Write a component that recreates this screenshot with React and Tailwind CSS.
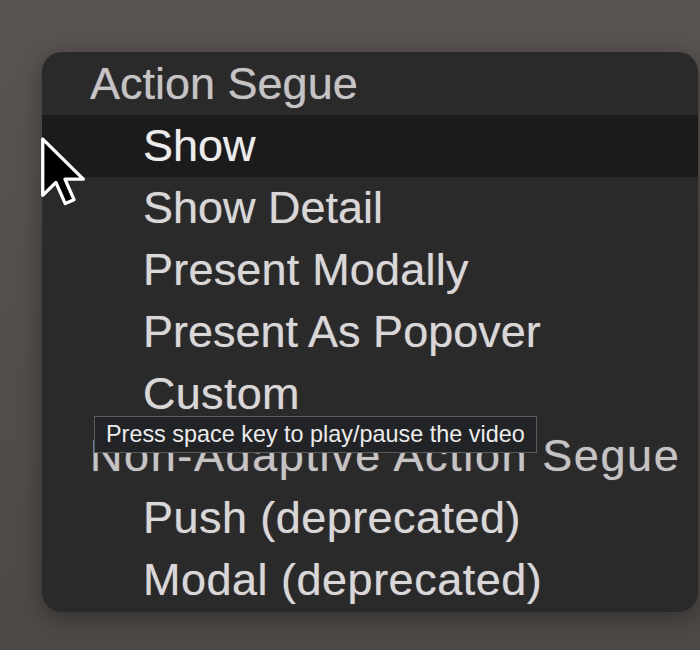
import React from "react";

const rows = [
  { t: "Action Segue", h: true, tr: "" },
  { t: "Show", sel: true, tr: "" },
  { t: "Show Detail", tr: "" },
  { t: "Present Modally", tr: "tracking-[0.2px]" },
  { t: "Present As Popover", tr: "" },
  { t: "Custom", tr: "tracking-[0.3px]" },
  { t: "Non-Adaptive Action Segue", h: true, tr: "tracking-[1.6px]" },
  { t: "Push (deprecated)", tr: "tracking-[0.45px]" },
  { t: "Modal (deprecated)", tr: "tracking-[0.5px]" },
];

export default function App() {
  return (
    <div className="relative w-[700px] h-[650px] overflow-hidden bg-gradient-to-b from-[#5a5452] to-[#4d4947]" style={{ fontFamily: '"Liberation Sans", Arial, sans-serif' }}>
      <div className="pt-[52px] pl-[42px]">
        <div className="w-[656px] rounded-[20px] bg-[#2a2a2a] pt-px pb-px shadow-[0_6px_24px_rgba(0,0,0,0.35)] overflow-hidden">
          {rows.map((r, i) => (
            <div
              key={i}
              className={
                "h-[62px] leading-[62px] text-[45px] whitespace-nowrap [text-shadow:0_0_1px_rgba(230,225,225,0.55)] " +
                r.tr + " " +
                (r.h ? "pl-[48px] text-[#c6c3c5] " : "pl-[101px] text-[#d9d7d7] ") +
                (r.sel ? "bg-[#1b1b1b] text-[#ededed]" : "")
              }
            >
              {r.t}
            </div>
          ))}
        </div>
      </div>

      <div className="absolute left-[94px] top-[416px] w-[443px] h-[37px] bg-[#222326] border border-[#5c5c5c] pl-[11px] text-[23.4px] leading-[35px] text-[#ececec] whitespace-nowrap">
        Press space key to play/pause the video
      </div>

      <svg className="absolute left-[40px] top-[136px]" width="48" height="72" viewBox="0 0 17.5 26">
        <path
          d="M1 1 L1 21.5 L5.8 16.8 L9.2 24.5 L12.4 23.1 L9.1 15.6 L15.8 15.6 Z"
          fill="#000"
          stroke="#fff"
          strokeWidth="1.2"
          strokeLinejoin="round"
        />
      </svg>
    </div>
  );
}
